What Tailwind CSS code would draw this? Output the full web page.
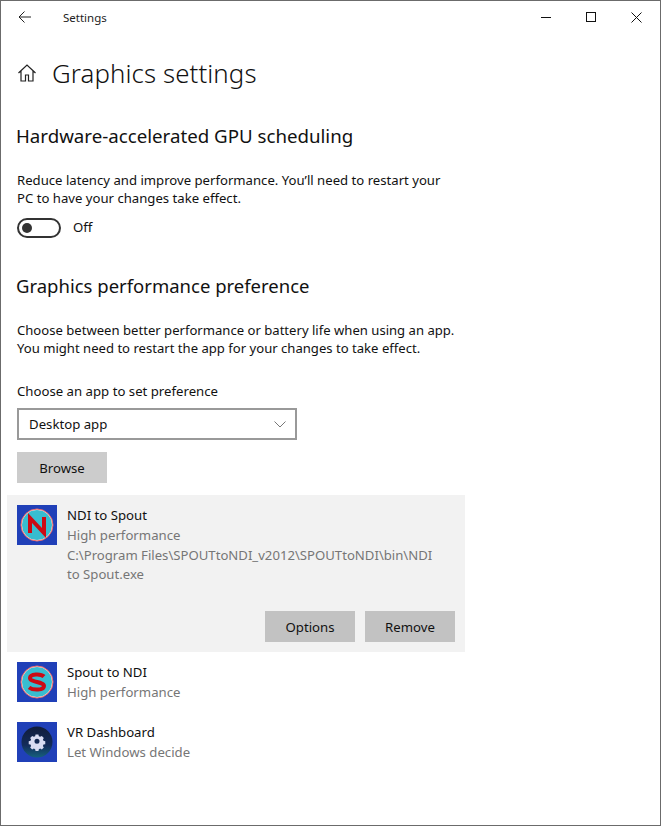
<!DOCTYPE html>
<html><head><meta charset="utf-8"><script src="https://cdn.jsdelivr.net/npm/@tailwindcss/browser@4"></script></head>
<body class="bg-white">
<div class="w-[661px] h-[826px] border border-[#6b6b6b] bg-white font-['Noto_Sans',sans-serif] text-[14px] text-[#111] overflow-hidden flex flex-col">
  <div class="h-[32px] shrink-0 flex items-center">
    <svg class="ml-[17px] w-[14px] h-[14px]" viewBox="0 0 14 14" fill="none" stroke="#222" stroke-width="1"><path d="M13 7H1M6.500 1.500L1 7l5.500 5.500"/></svg>
    <span class="ml-[31px] pt-[2px] text-[11.5px] text-[#222]">Settings</span>
    <div class="ml-auto flex items-center">
      <svg class="w-[10px] h-[10px] mr-[35px]" viewBox="0 0 10 10" stroke="#111" fill="none"><path d="M0 5.500H10"/></svg>
      <svg class="w-[10px] h-[10px] mr-[35px]" viewBox="0 0 10 10" stroke="#111" fill="none"><rect x=".5" y=".5" width="9" height="9"/></svg>
      <svg class="w-[11px] h-[11px] mr-[18px]" viewBox="0 0 11 11" stroke="#111" fill="none"><path d="M.5.5l10 10M10.500.5l-10 10"/></svg>
    </div>
  </div>
  <div class="mt-[20px] h-[40px] flex items-center">
    <svg class="ml-[16px] w-[20px] h-[20px]" viewBox="0 0 20 20" fill="none" stroke="#222" stroke-width="1.2"><path d="M1.500 10L10 2l8.500 8M4 8v10h4.500v-6h3v6H16V8"/></svg>
    <span class="ml-[15px] text-[25.8px] font-light leading-[40px] text-[#111] tracking-[0.1px]">Graphics settings</span>
  </div>
  <h2 class="ml-[15px] mt-[29px] text-[18.7px] leading-[28px] font-normal">Hardware-accelerated GPU scheduling</h2>
  <p class="ml-[16px] mt-[21px] w-[440px] text-[13.15px] leading-[18px]">Reduce latency and improve performance. You’ll need to restart your<br>PC to have your changes take effect.</p>
  <div class="ml-[16px] mt-[11px] flex items-center h-[20px]">
    <span class="w-[44px] h-[20px] rounded-full border-2 border-[#333] flex items-center pl-[3px]"><span class="w-[10px] h-[10px] rounded-full bg-[#333]"></span></span>
    <span class="ml-[12px] text-[13.2px]">Off</span>
  </div>
  <h2 class="ml-[15px] mt-[34px] text-[18.5px] leading-[28px] font-normal">Graphics performance preference</h2>
  <p class="ml-[16px] mt-[21px] w-[450px] text-[13.1px] leading-[18px]">Choose between better performance or battery life when using an app.<br>You might need to restart the app for your changes to take effect.</p>
  <div class="ml-[16px] mt-[25px] text-[13.2px] leading-[19px]">Choose an app to set preference</div>
  <div class="ml-[16px] mt-[7px] w-[280px] h-[32px] border-2 border-[#999] flex items-center justify-between pl-[10px] pr-[9px] text-[13.2px]">
    <span class="pt-[1px]">Desktop app</span>
    <svg class="w-[12px] h-[7px]" viewBox="0 0 12 7" fill="none" stroke="#777"><path d="M.5.5L6 6l5.500-5.500"/></svg>
  </div>
  <button class="ml-[16px] mt-[12px] w-[90px] h-[31px] bg-[#ccc] text-[13.2px] pt-[2px] flex items-center justify-center">Browse</button>
  <div class="ml-[6px] mt-[12px] w-[458px] h-[157px] bg-[#f2f2f2] pl-[10px] pr-[10px] pt-[10px] flex flex-col">
    <div class="flex gap-[10px]">
      <svg class="w-[40px] h-[40px] shrink-0" viewBox="0 0 40 40"><rect width="40" height="40" fill="#2040b8"/><circle cx="20" cy="20" r="15.500" fill="#37bdd0" stroke="#f5dada" stroke-width="1"/><circle cx="20" cy="20" r="16" fill="none" stroke="#ef6a6a" stroke-width="1"/><path d="M13 28V13l14 15V12" fill="none" stroke="#cc0a14" stroke-width="4"/></svg>
      <div class="text-[13.2px] leading-[20px] w-[380px]">
        <div>NDI to Spout</div>
        <div class="text-[#767676]">High performance</div>
        <div class="text-[#767676] mt-[1px] leading-[19px] text-[13.15px]">C:\Program Files\SPOUTtoNDI_v2012\SPOUTtoNDI\bin\NDI<br>to Spout.exe</div>
      </div>
    </div>
    <div class="mt-auto mb-[10px] flex justify-end gap-[10px] text-[13.2px]">
      <button class="w-[90px] h-[31px] bg-[#c2c2c2] pt-[2px] flex items-center justify-center">Options</button>
      <button class="w-[90px] h-[31px] bg-[#c2c2c2] pt-[2px] flex items-center justify-center">Remove</button>
    </div>
  </div>
  <div class="ml-[16px] mt-[10px] flex gap-[10px] h-[40px]">
    <svg class="w-[40px] h-[40px] shrink-0" viewBox="0 0 40 40"><rect width="40" height="40" fill="#2040b8"/><circle cx="20" cy="20" r="15.500" fill="#37bdd0" stroke="#f5dada" stroke-width="1"/><circle cx="20" cy="20" r="16" fill="none" stroke="#ef6a6a" stroke-width="1"/><path d="M27 14.500C24 11.500 13 11.500 13 16c0 4.500 14 3.500 14 8 0 4.500-11 4.500-15 1.500" fill="none" stroke="#cc0a14" stroke-width="4"/></svg>
    <div class="text-[13.2px] leading-[20px]"><div>Spout to NDI</div><div class="text-[#767676]">High performance</div></div>
  </div>
  <div class="ml-[16px] mt-[20px] flex gap-[10px] h-[40px]">
    <svg class="w-[40px] h-[40px] shrink-0" viewBox="0 0 40 40"><defs><linearGradient id="g" x1="0" y1="0" x2="0" y2="1"><stop offset="0" stop-color="#101c3a"/><stop offset=".6" stop-color="#132c5a"/><stop offset="1" stop-color="#16607c"/></linearGradient></defs><rect width="40" height="40" fill="#2040b8"/><circle cx="20" cy="20" r="15.500" fill="url(#g)"/><path d="M18 10.500h4l.6 2.500 1.800.8 2.300-1.300 2.800 2.800-1.300 2.300.8 1.800 2.500.6v4l-2.500.6-.8 1.800 1.300 2.300-2.800 2.800-2.300-1.300-1.800.8-.6 2.500h-4l-.6-2.500-1.800-.8-2.300 1.300-2.800-2.800 1.300-2.300-.8-1.800-2.500-.6v-4l2.500-.6.8-1.800-1.300-2.300 2.800-2.800 2.300 1.300 1.800-.8zM20 16.500a3.500 3.500 0 1 0 0 7 3.500 3.500 0 1 0 0-7z" transform="translate(20 20) scale(.72) translate(-20 -21)" fill="#d8dcf2" fill-rule="evenodd"/></svg>
    <div class="text-[13.2px] leading-[20px]"><div>VR Dashboard</div><div class="text-[#767676]">Let Windows decide</div></div>
  </div>
</div>
</body></html>
